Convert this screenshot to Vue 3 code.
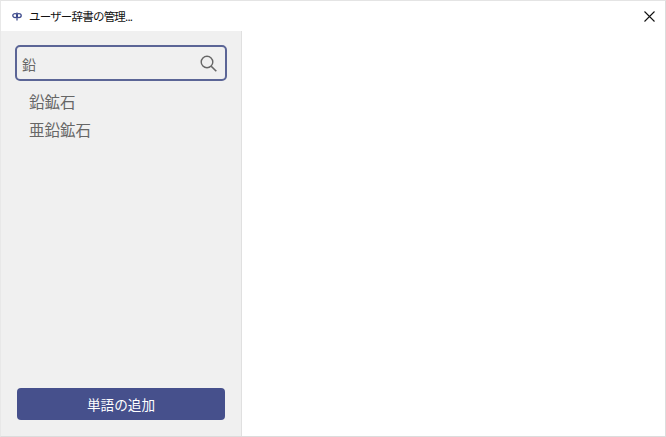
<template>
  <div class="window">
    <header class="titlebar">
      <svg class="app-icon" width="10" height="9" viewBox="0 0 10 9">
        <path d="M5 0.5V8.5" stroke="#3d4a8c" stroke-width="1.3" fill="none" />
        <ellipse cx="3.1" cy="3.6" rx="2.3" ry="2" stroke="#3d4a8c" stroke-width="1.3" fill="none" />
        <ellipse cx="6.9" cy="3.6" rx="2.3" ry="2" stroke="#3d4a8c" stroke-width="1.3" fill="none" />
      </svg>
      <span class="title">ユーザー辞書の管理...</span>
      <svg class="close" width="11" height="11" viewBox="0 0 11 11">
        <path d="M0.5 0.5L10.5 10.5M10.5 0.5L0.5 10.5" stroke="#111" stroke-width="1.1" fill="none" />
      </svg>
    </header>
    <div class="body">
      <aside class="sidebar">
        <div class="search">
          <span class="query">{{ query }}</span>
          <svg width="17" height="17" viewBox="0 0 17 17">
            <circle cx="7" cy="7" r="5.8" stroke="#666" stroke-width="1.4" fill="none" />
            <path d="M11.2 11.2L16.3 16.3" stroke="#666" stroke-width="1.6" fill="none" />
          </svg>
        </div>
        <ul class="words">
          <li v-for="word in words" :key="word">{{ word }}</li>
        </ul>
        <button class="add" type="button">単語の追加</button>
      </aside>
      <main class="content"></main>
    </div>
  </div>
</template>

<script setup>
const query = '鉛'
const words = ['鉛鉱石', '亜鉛鉱石']
</script>

<style>
html, body { margin: 0; background: #fff; overflow: hidden; }
</style>

<style scoped>
.window {
  width: 666px;
  height: 437px;
  box-sizing: border-box;
  display: flex;
  flex-direction: column;
  background: #fff;
  border-top: 1px solid #e4e4e4;
  border-left: 1px solid #e8e8e8;
  border-right: 1px solid #dcdcdc;
  border-bottom: 1px solid #dcdcdc;
  font-family: "Noto Sans CJK JP", "Liberation Sans", sans-serif;
}
.titlebar {
  height: 30px;
  flex: none;
  display: flex;
  align-items: center;
  padding: 0 10px 0 11px;
  gap: 7px;
}
.title { font-size: 11.5px; letter-spacing: -0.8px; color: #111; }
.close { margin-left: auto; }
.body { flex: 1; display: flex; min-height: 0; }
.sidebar {
  width: 241px;
  box-sizing: border-box;
  background: #f0f0f0;
  border-right: 1px solid #e0e0e0;
  padding: 14px 14px 16px 14px;
  display: flex;
  flex-direction: column;
}
.search {
  height: 36px;
  box-sizing: border-box;
  border: 2px solid #5b6596;
  border-radius: 5px;
  display: flex;
  align-items: center;
  justify-content: space-between;
  padding: 0 8px 0 5px;
}
.query { font-size: 14px; color: #666; padding-top: 1px; }
.words {
  list-style: none;
  margin: 6px 0 0;
  padding: 0 0 0 14px;
  flex: 1;
}
.words li { height: 28px; line-height: 28px; font-size: 15.5px; color: #666; }
.add {
  height: 32px;
  margin: 0 2px;
  border: 0;
  border-radius: 4px;
  background: #46508c;
  color: #fff;
  font-family: inherit;
  font-size: 13.6px;
}
.content { flex: 1; background: #fff; }
</style>
